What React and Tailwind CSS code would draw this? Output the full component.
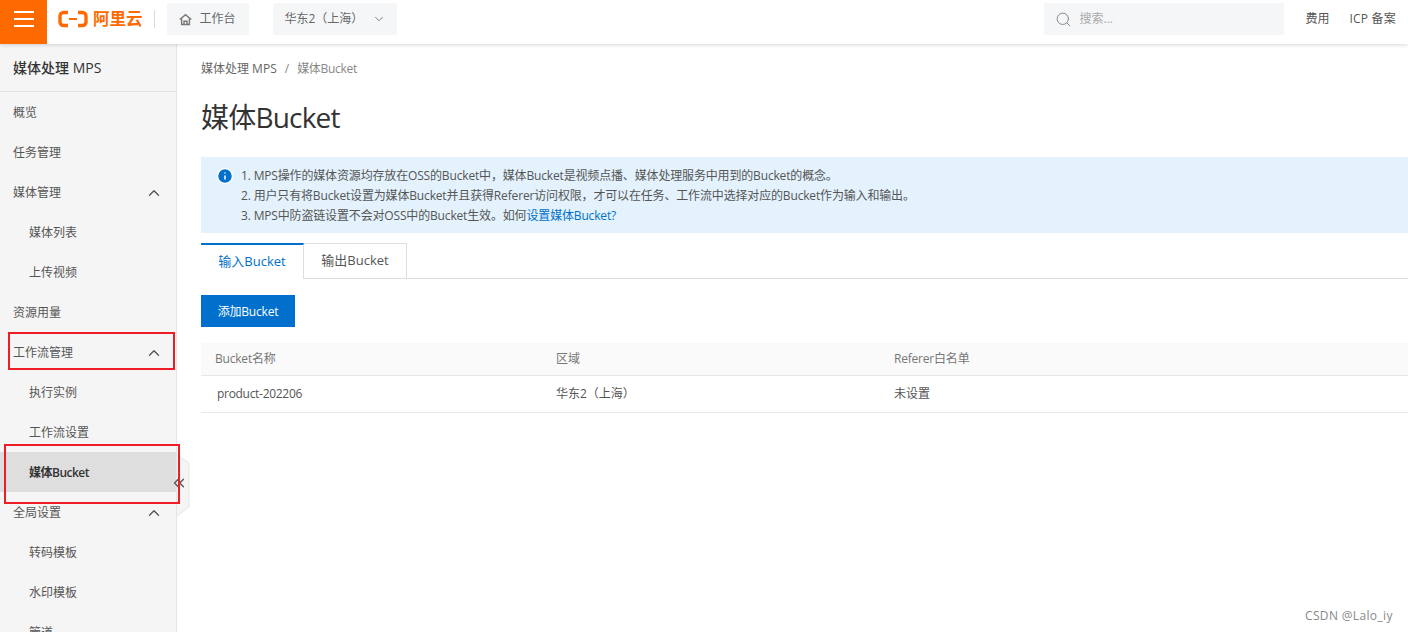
import React from 'react';
import { ChevronUp, ChevronDown, ChevronsLeft, Search, Info } from 'lucide-react';

const menu = [
  { label: '概览' },
  { label: '任务管理' },
  { label: '媒体管理', open: true },
  { label: '媒体列表', sub: true },
  { label: '上传视频', sub: true },
  { label: '资源用量' },
  { label: '工作流管理', open: true },
  { label: '执行实例', sub: true },
  { label: '工作流设置', sub: true },
  { label: '媒体Bucket', sub: true, active: true },
  { label: '全局设置', open: true },
  { label: '转码模板', sub: true },
  { label: '水印模板', sub: true },
  { label: '管道', sub: true },
];

const TopBar = () => (
  <header className="relative z-10 flex h-[44px] shrink-0 items-start bg-white shadow-[0_1px_4px_rgba(0,0,0,0.16)]">
    <div className="flex h-[44px] w-[47px] flex-col items-center gap-[5px] bg-[#ff6a00] pt-[11px]">
      <span className="h-[2px] w-[20px] bg-white" />
      <span className="h-[2px] w-[20px] bg-white" />
      <span className="h-[2px] w-[20px] bg-white" />
    </div>
    <div className="ml-[11px] flex h-[38px] items-center">
      <svg width="30" height="18" viewBox="0 0 30 18" fill="none">
        <path d="M10 2.500H5.500C3.500 2.500 2 4 2 6v6c0 2 1.500 3.500 3.500 3.500H10" stroke="#ff6a00" strokeWidth="3.400" />
        <path d="M20 2.500h4.500C26.500 2.500 28 4 28 6v6c0 2-1.500 3.500-3.500 3.500H20" stroke="#ff6a00" strokeWidth="3.400" />
        <path d="M11 9h8" stroke="#ff6a00" strokeWidth="2" />
      </svg>
      <span className="ml-[5px] text-[16.500px] font-bold leading-none text-[#ff6a00]">阿里云</span>
    </div>
    <div className="ml-[11px] mt-[10px] h-[18px] w-px bg-[#d9d9d9]" />
    <div className="ml-[12px] mt-[3px] flex h-[32px] w-[82px] items-center justify-center gap-[7px] rounded-[2px] bg-[#f5f6f7] text-[12px] text-[#666]">
      <svg width="13" height="13" viewBox="0 0 13 13" fill="none" stroke="#777" strokeWidth="1.400">
        <path d="M0.800 6.500 6.500 1.600 12.200 6.500" />
        <path d="M2.600 5.500v6h7.800v-6" />
        <path d="M5 11.500V8.200h3v3.300" />
      </svg>
      <span>工作台</span>
    </div>
    <div className="ml-[24px] mt-[3px] flex h-[32px] w-[124px] items-center rounded-[2px] bg-[#f5f6f7] pl-[12px] text-[12px] text-[#666]">
      <span>华东2（上海）</span>
      <ChevronDown className="ml-[9px] h-[14px] w-[14px] text-[#777]" strokeWidth={1.600} />
    </div>
    <div className="ml-auto mt-[3px] flex h-[32px] w-[240px] items-center rounded-[2px] bg-[#f5f6f7] pl-[11px] text-[12px] text-[#aaa]">
      <Search className="h-[17px] w-[17px] text-[#888]" strokeWidth={1.400} />
      <span className="ml-[8px]">搜索...</span>
    </div>
    <span className="ml-[22px] mt-[10px] text-[12px] text-[#555]">费用</span>
    <span className="ml-[20px] mr-[12px] mt-[10px] text-[12px] tracking-[0.2px] text-[#555]">ICP 备案</span>
  </header>
);

const Sidebar = () => (
  <aside className="relative w-[177px] shrink-0 border-r border-[#e5e5e5] bg-[#f5f5f5]">
    <div className="flex h-[48px] items-center border-b border-[#e3e3e3] pl-[13px] text-[14px] font-medium text-[#333]">媒体处理 MPS</div>
    {menu.map((item) => (
      <div
        key={item.label}
        className={`flex h-[40px] items-center justify-between pr-[13px] pt-[2px] text-[12px] ${item.sub ? 'pl-[29px]' : 'pl-[13px]'} ${item.active ? 'bg-[#dedede] font-semibold tracking-[-0.5px] text-[#333]' : 'text-[#555]'}`}
      >
        <span>{item.label}</span>
        {item.open && <ChevronUp className="h-[18px] w-[18px] text-[#555]" strokeWidth={1.800} />}
      </div>
    ))}
  </aside>
);

const rows = [
  { name: 'product-202206', region: '华东2（上海）', referer: '未设置' },
];

const Main = () => (
  <main className="min-w-0 flex-1 pl-[24px] pt-[16px]">
    <div className="flex h-[18px] items-center text-[12px] text-[#666]">
      <span>媒体处理 MPS</span>
      <span className="mx-[8px] text-[#888]">/</span>
      <span className="tracking-[-0.3px] text-[#888]">媒体Bucket</span>
    </div>
    <h1 className="mt-[19px] text-[28px] font-normal leading-[40px] tracking-[-0.8px] text-[#333]">媒体Bucket</h1>
    <div className="mt-[20px] flex h-[76px] items-start bg-[#e3f2fd] pl-[15px] pt-[9px]">
      <Info className="mt-[1px] h-[18px] w-[18px] fill-[#0070cc] text-white" strokeWidth={2} />
      <div className="ml-[7px] text-[12px] leading-[20px] tracking-[-0.16px] text-[#555]">
        <p>1. MPS操作的媒体资源均存放在OSS的Bucket中，媒体Bucket是视频点播、媒体处理服务中用到的Bucket的概念。</p>
        <p>2. 用户只有将Bucket设置为媒体Bucket并且获得Referer访问权限，才可以在任务、工作流中选择对应的Bucket作为输入和输出。</p>
        <p>3. MPS中防盗链设置不会对OSS中的Bucket生效。如何<span className="text-[#0070cc]">设置媒体Bucket?</span></p>
      </div>
    </div>
    <div className="mt-[10px] flex h-[36px] border-b border-[#dedede] text-[13px]">
      <div className="flex h-[36px] w-[103px] items-center justify-center border-r border-t-2 border-r-[#dedede] border-t-[#0070cc] bg-white text-[#0070cc]">输入Bucket</div>
      <div className="flex h-[35px] w-[103px] items-center justify-center border-r border-t border-[#dedede] text-[#555]">输出Bucket</div>
    </div>
    <button className="mt-[16px] flex h-[32px] w-[94px] items-center justify-center bg-[#0070cc] pt-[1px] text-[12px] tracking-[-0.2px] text-white">添加Bucket</button>
    <div className="mt-[16px] text-[12px]">
      <div className="grid h-[33px] grid-cols-[341px_338px_1fr] items-center border-b border-[#e8e8e8] bg-[#fafafa] pl-[14px] text-[#777]">
        <span className="tracking-[-0.2px]">Bucket名称</span>
        <span>区域</span>
        <span className="tracking-[-0.2px]">Referer白名单</span>
      </div>
      {rows.map((row) => (
        <div key={row.name} className="grid h-[37px] grid-cols-[339px_338px_1fr] items-center border-b border-[#e8e8e8] pl-[16px] text-[#555]">
          <span className="tracking-[-0.3px]">{row.name}</span>
          <span>{row.region}</span>
          <span>{row.referer}</span>
        </div>
      ))}
    </div>
  </main>
);

export default function App() {
  return (
    <div className="relative flex h-[632px] w-[1408px] flex-col overflow-hidden bg-white font-['Open_Sans','Noto_Sans_CJK_SC',sans-serif]">
      <TopBar />
      <div className="flex min-h-0 flex-1">
        <Sidebar />
        <Main />
      </div>
      {/* sidebar collapse handle */}
      <svg className="absolute left-[176px] top-[455px]" width="14" height="62" viewBox="0 0 14 62">
        <path d="M1 0 13 8V52L1 61" fill="#f5f5f5" stroke="#e5e5e5" />
      </svg>
      <ChevronsLeft className="absolute left-[170px] top-[474px] h-[18px] w-[18px] text-[#555]" strokeWidth={1.800} />
      {/* red annotation boxes */}
      <div className="absolute left-[8px] top-[332px] h-[38px] w-[167px] border-2 border-[#ee1c25]" />
      <div className="absolute left-[4px] top-[444px] h-[60px] w-[176px] border-2 border-[#ee1c25]" />
      <span className="absolute left-[1305px] top-[607px] text-[12px] tracking-[0.35px] text-[#888]">CSDN @Lalo_iy</span>
    </div>
  );
}
